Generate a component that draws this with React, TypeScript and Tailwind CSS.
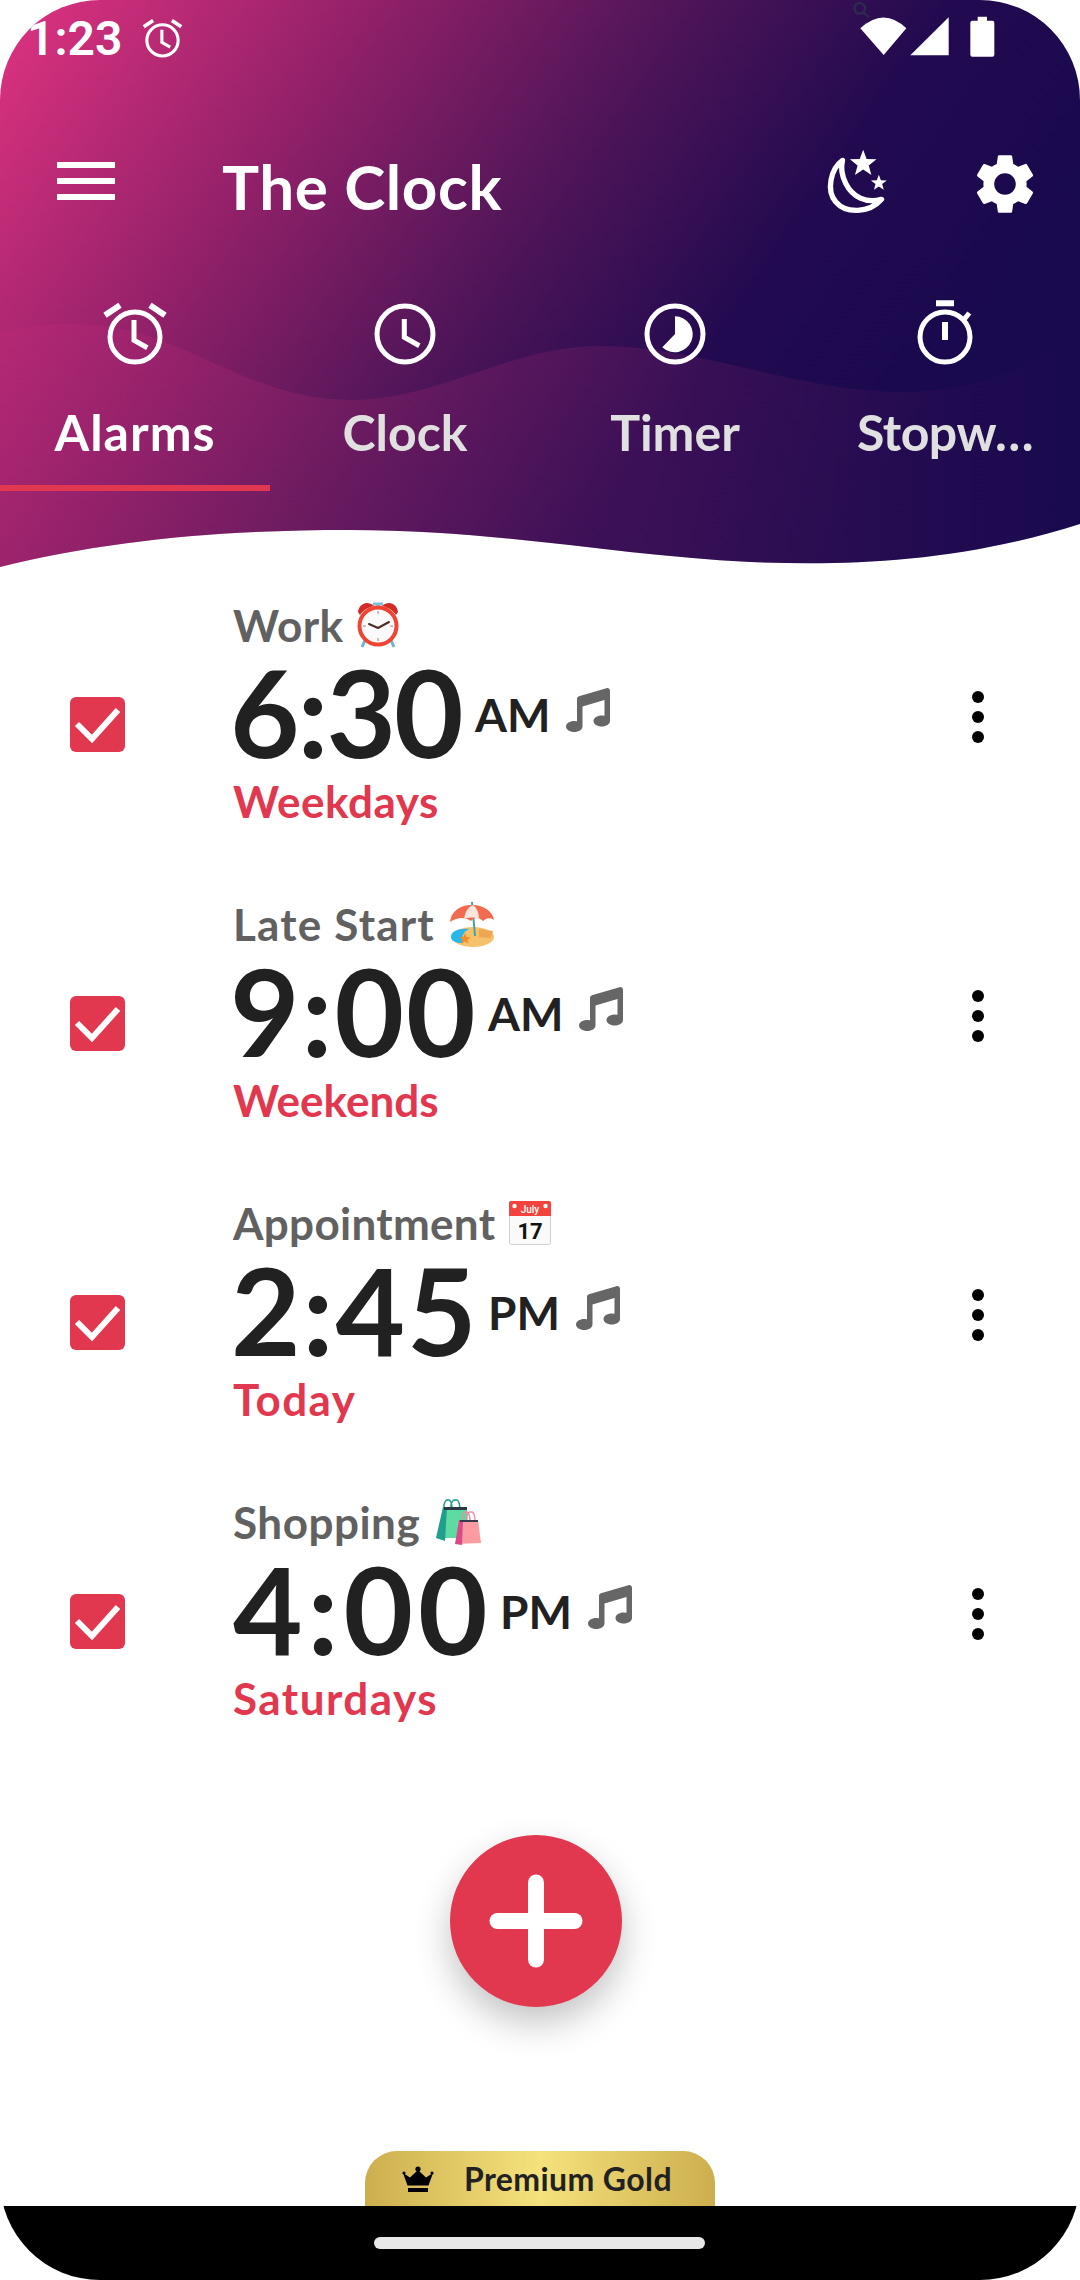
import React from "react";
import { FaMusic } from "react-icons/fa";
import { MdSettings } from "react-icons/md";

function star(cx: number, cy: number, r: number) {
  const pts: string[] = [];
  for (let i = 0; i < 10; i++) {
    const rad = i % 2 === 0 ? r : r * 0.42;
    const a = -Math.PI / 2 + (i * Math.PI) / 5;
    pts.push(`${cx + rad * Math.cos(a)},${cy + rad * Math.sin(a)}`);
  }
  return pts.join(" ");
}

function AlarmIcon({ size = 72 }: { size?: number }) {
  return (
    <svg width={size} height={size} viewBox="0 0 72 72" fill="none" stroke="#fff">
      <circle cx="36" cy="39" r="25" strokeWidth="5" />
      <path d="M35 22V42.3L48.3 49.7" strokeWidth="5" />
      <path d="M6 17.3L21 7.3M51 7.3L66 17.3" strokeWidth="6" />
    </svg>
  );
}
function ClockIcon() {
  return (
    <svg width="72" height="72" viewBox="0 0 72 72" fill="none" stroke="#fff">
      <circle cx="36" cy="36" r="28" strokeWidth="5" />
      <path d="M35.3 21V39.3L50.3 47.7" strokeWidth="5" />
    </svg>
  );
}
function TimerIcon() {
  return (
    <svg width="72" height="72" viewBox="0 0 72 72" fill="none">
      <circle cx="36" cy="36" r="28" strokeWidth="5" stroke="#fff" />
      <path d="M36 36V18.3A18 18 0 1 1 23.3 49.3Z" fill="#fff" />
    </svg>
  );
}
function StopwatchIcon() {
  return (
    <svg width="72" height="72" viewBox="0 0 72 72" fill="none" stroke="#fff">
      <circle cx="36" cy="39" r="25" strokeWidth="5" />
      <path d="M36 24V42M27 5.3H45" strokeWidth="6" />
      <path d="M54.3 22.3L60.3 15" strokeWidth="5" />
    </svg>
  );
}
function MoonIcon() {
  return (
    <svg width="67" height="70" viewBox="130 440 200 210" fill="none">
      <path
        d="M185 480C150 505 135 570 165 605C195 640 265 640 302 597C255 610 215 590 195 550C180 520 180 500 185 480Z"
        stroke="#fff"
        strokeWidth="16"
        strokeLinejoin="round"
      />
      <polygon points={star(247, 490, 42)} fill="#fff" />
      <polygon points={star(294, 548, 25)} fill="#fff" />
    </svg>
  );
}
function StatusIcons() {
  return (
    <svg width="150" height="60" viewBox="200 0 450 180">
      <circle cx="238" cy="25" r="16" fill="none" stroke="#2e2a4c" strokeWidth="7" />
      <path d="M250 37L266 52" stroke="#2e2a4c" strokeWidth="7" />
      <path d="M240 85Q310 20 378 85L310 165Z" fill="#fff" />
      <path d="M390 166L505 52V166Z" fill="#fff" />
      <path d="M592 50H620V62H636Q642 62 642 68V164Q642 170 636 170H576Q570 170 570 164V68Q570 62 576 62H592Z" fill="#fff" />
    </svg>
  );
}
function CrownIcon() {
  return (
    <svg width="32" height="26" viewBox="0 0 32 26" fill="#000">
      <circle cx="16" cy="3" r="2.6" />
      <circle cx="2" cy="7" r="1.6" />
      <circle cx="30" cy="7" r="1.6" />
      <path d="M1 7L8 11.5L16 4L24 11.5L31 7L26.5 19.5H5.5Z" />
      <rect x="6" y="22" width="20" height="4" />
    </svg>
  );
}

function EmojiAlarm() {
  return (
    <svg width="42" height="48" viewBox="0 0 42 48">
      <path d="M9 37L5 46M33 37L37 46" stroke="#6fb4d4" strokeWidth="3" />
      <path d="M21 2V8M16 3H26" stroke="#7cc0dc" strokeWidth="3" />
      <path d="M1 11C2 3 10 -1 17 5C12 6 6 9 3 14Z" fill="#d32a25" />
      <path d="M41 11C40 3 32 -1 25 5C30 6 36 9 39 14Z" fill="#d32a25" />
      <circle cx="21" cy="25" r="18.5" fill="#fafafa" stroke="#f04434" strokeWidth="4" />
      <path d="M21 27L12 23M21 27L32 21" stroke="#4e2d25" strokeWidth="2" strokeLinecap="round" />
      <g fill="#b9a79f">
        <rect x="20.4" y="10" width="1.4" height="3" />
        <rect x="20.4" y="37" width="1.4" height="3" />
        <rect x="6" y="24.4" width="3" height="1.4" />
        <rect x="33" y="24.4" width="3" height="1.4" />
      </g>
    </svg>
  );
}
function EmojiBeach() {
  return (
    <svg width="46" height="46" viewBox="0 0 46 46">
      <ellipse cx="24" cy="36" rx="21" ry="10" fill="#f5c26b" />
      <path d="M2 36C2 30 10 27 20 28C14 31 12 36 14 42C7 42 2 40 2 36Z" fill="#29b6e8" />
      <path d="M30 28L44 30L42 37L30 36Z" fill="#f0a552" />
      <path d="M23 1L26 35" stroke="#3fa5a8" strokeWidth="2" />
      <path d="M1 21C2 10 12 3 24 4C35 4 44 11 45 19C41 16 37 17 34 20C30 16 25 16 22 20C16 16 9 16 1 21Z" fill="#f26a50" />
      <path d="M15 18C16 11 19 6 24 4C28 7 30 12 30 18C26 16 20 16 15 18Z" fill="#fbe6dc" />
      <polygon points={star(16, 38, 6)} fill="#f58a26" />
    </svg>
  );
}
function EmojiCalendar() {
  return (
    <svg width="42" height="44" viewBox="0 0 42 44">
      <rect x="0.5" y="0.5" width="41" height="43" rx="2" fill="#fafafa" stroke="#d0d0d0" />
      <path d="M0 15V2Q0 0 2 0H40Q42 0 42 2V15Z" fill="#f4433c" />
      <circle cx="5.5" cy="5" r="2.2" fill="#fff" />
      <circle cx="36.5" cy="5" r="2.2" fill="#fff" />
      <text x="21" y="12" textAnchor="middle" fontSize="10" fontWeight="500" fill="#fff" fontFamily="Roboto, sans-serif">July</text>
      <text x="21" y="38" textAnchor="middle" fontSize="22" fontWeight="700" fill="#111" fontFamily="Roboto, sans-serif">17</text>
    </svg>
  );
}
function EmojiBags() {
  return (
    <svg width="46" height="48" viewBox="0 0 46 48">
      <path d="M8 14V7Q9 1 13 2Q16 3 16 12M15 14V7Q16 1 21 2Q24 3 24 14" fill="none" stroke="#26a58e" strokeWidth="1.6" />
      <path d="M7 9H31V40H2Z" fill="#5edba2" />
      <path d="M7 9H11L9 43L0 40Z" fill="#1f9f8c" />
      <path d="M8 9H31V12H8Z" fill="#2b3844" />
      <path d="M26 24V18Q28 13 31 14Q34 15 34 24M31 23V18Q32 13 36 14Q39 15 39 23" fill="none" stroke="#f08aa0" strokeWidth="1.4" />
      <path d="M23 22H42L45 45L20 46Z" fill="#fd9ba2" />
      <path d="M23 22H27L26 47L19 46Z" fill="#d84b86" />
      <path d="M24 22H42V24H24Z" fill="#3a3a4e" />
    </svg>
  );
}

const alarms = [
  { label: "Work", ltrack: "tracking-[0.4px]", emoji: <EmojiAlarm />, gap: "ml-[14px]", time: "6:30", track: "tracking-[-2px] ml-[-3px]", unit: "AM", tw: "w-[245px]", sub: "Weekdays", strack: "tracking-[0.5px]" },
  { label: "Late Start", ltrack: "tracking-[1.2px]", emoji: <EmojiBeach />, gap: "ml-[14px]", time: "9:00", track: "tracking-[2px] ml-[-3px]", unit: "AM", tw: "w-[258px]", sub: "Weekends", strack: "tracking-[0px]" },
  { label: "Appointment", ltrack: "tracking-[0.3px]", emoji: <EmojiCalendar />, gap: "ml-[14px]", time: "2:45", track: "tracking-[2px] ml-[-2px]", unit: "PM", tw: "w-[257px]", sub: "Today", strack: "tracking-[1.4px]" },
  { label: "Shopping", ltrack: "tracking-[0.5px]", emoji: <EmojiBags />, gap: "ml-[16px]", time: "4:00", track: "tracking-[5px]", unit: "PM", tw: "w-[267px]", sub: "Saturdays", strack: "tracking-[1.5px]" },
];

const tabs = [
  { label: "Alarms", icon: <AlarmIcon />, color: "text-white tracking-[1px]", bar: "bg-[#e2384f]" },
  { label: "Clock", icon: <ClockIcon />, color: "text-[#e0e0e0]", bar: "bg-transparent" },
  { label: "Timer", icon: <TimerIcon />, color: "text-[#e0e0e0]", bar: "bg-transparent" },
  { label: "Stopw…", icon: <StopwatchIcon />, color: "text-[#e0e0e0] tracking-[-0.5px]", bar: "bg-transparent" },
];

export default function App() {
  return (
    <div className="w-[1080px] h-[2280px] relative overflow-hidden rounded-[100px] bg-white flex flex-col font-['Lato',sans-serif]">
      <header className="relative h-[575px] shrink-0">
        <svg className="absolute inset-0" width="1080" height="575" viewBox="0 0 1080 575">
          <defs>
            <linearGradient id="hdr" gradientUnits="userSpaceOnUse" x1="0" y1="50" x2="800" y2="600">
              <stop offset="0" stopColor="#d9317e" />
              <stop offset="0.3" stopColor="#8f2068" />
              <stop offset="0.55" stopColor="#4f1558" />
              <stop offset="0.78" stopColor="#220a50" />
              <stop offset="1" stopColor="#19094e" />
            </linearGradient>
            <linearGradient id="lift" gradientUnits="userSpaceOnUse" x1="0" y1="0" x2="1080" y2="0">
              <stop offset="0" stopColor="#c02a78" stopOpacity="0.3" />
              <stop offset="0.6" stopColor="#a0286f" stopOpacity="0.2" />
              <stop offset="1" stopColor="#a0286f" stopOpacity="0" />
            </linearGradient>
          </defs>
          <path d="M0 0H1080V524C960 562 850 566 750 562C620 556 500 530 350 530C220 530 110 540 0 567Z" fill="url(#hdr)" />
          <path
            d="M0 333C40 322 100 318 160 340C230 368 280 400 350 400C440 400 510 346 600 346C700 346 800 392 900 392C990 392 1050 360 1080 315V524C960 562 850 566 750 562C620 556 500 530 350 530C220 530 110 540 0 567Z"
            fill="url(#lift)"
          />
        </svg>
        <div className="relative flex flex-col">
          <div className="h-[76px] flex items-start">
            <span className="ml-[27px] mt-[11px] text-[48px] leading-[56px] font-semibold text-white font-['Roboto',sans-serif]">1:23</span>
            <span className="ml-[18px] mt-[16px]">
              <AlarmIcon size={45} />
            </span>
            <span className="ml-auto mr-[83px]">
              <StatusIcons />
            </span>
          </div>
          <div className="h-[220px] flex items-center pl-[57px] pr-[45px]">
            <div className="w-[58px] flex flex-col gap-[10px] mt-[-10px]">
              <div className="h-[6px] bg-white" />
              <div className="h-[6px] bg-white" />
              <div className="h-[6px] bg-white" />
            </div>
            <span className="ml-[107px] text-[62px] leading-[72px] font-bold text-white tracking-[0.6px]">The Clock</span>
            <span className="ml-auto mt-[-9px]">
              <MoonIcon />
            </span>
            <span className="ml-[78px] mr-[-6px] mt-[-4px]">
              <MdSettings size={72} color="#fff" />
            </span>
          </div>
          <div className="h-[195px] grid grid-cols-4">
            {tabs.map((t) => (
              <div key={t.label} className="flex flex-col items-center">
                <div className="mt-[2px]">{t.icon}</div>
                <span className={`mt-[32px] text-[50px] leading-[60px] font-bold whitespace-nowrap ${t.color}`}>{t.label}</span>
                <div className={`mt-auto h-[6px] w-full ${t.bar}`} />
              </div>
            ))}
          </div>
        </div>
      </header>

      <main className="flex flex-col shrink-0">
        {alarms.map((a) => (
          <div key={a.label} className="h-[299px] flex items-center pl-[70px] pr-[96px]">
            <div className="w-[55px] h-[55px] rounded-[6px] bg-[#e2384f] shrink-0">
              <svg width="55" height="55" viewBox="0 0 55 55" fill="none">
                <path d="M7 27L22 42L48 13" stroke="#fff" strokeWidth="6" />
              </svg>
            </div>
            <div className="ml-[108px] flex flex-col mb-[24px]">
              <div className="flex items-center h-[60px]">
                <span className={`text-[44px] leading-[60px] font-bold text-[#616161] ${a.ltrack}`}>{a.label}</span>
                <span className={`${a.gap} flex`}>{a.emoji}</span>
              </div>
              <div className="flex items-center h-[110px] mt-[2px]">
                <span className={`${a.tw} text-[120px] leading-[110px] font-bold text-[#212121] ${a.track}`}>{a.time}</span>
                <span className="text-[46px] leading-[56px] font-bold text-[#212121] mt-[6px]">{a.unit}</span>
                <FaMusic size={44} color="#666" className="ml-[16px] mt-[-4px]" />
              </div>
              <span className={`mt-[4px] text-[44px] leading-[60px] font-bold text-[#e2384f] ${a.strack}`}>{a.sub}</span>
            </div>
            <div className="ml-auto flex flex-col gap-[8px] mb-[15px]">
              <div className="w-[12px] h-[12px] rounded-full bg-black" />
              <div className="w-[12px] h-[12px] rounded-full bg-black" />
              <div className="w-[12px] h-[12px] rounded-full bg-black" />
            </div>
          </div>
        ))}
      </main>

      <div className="flex-1 flex flex-col">
        <button className="relative mt-[64px] ml-[450px] w-[172px] h-[172px] rounded-full bg-[#e2384f] shadow-[0_16px_36px_rgba(0,0,0,0.24)] flex items-center justify-center">
          <svg width="94" height="94" viewBox="0 0 94 94">
            <rect x="0.5" y="39" width="93" height="16" rx="8" fill="#fff" />
            <rect x="39" y="0.5" width="16" height="93" rx="8" fill="#fff" />
          </svg>
        </button>
        <div className="mt-auto mx-auto w-[350px] h-[55px] rounded-t-[32px] bg-[linear-gradient(90deg,#cdae4e_0%,#f5e27c_50%,#cdae4e_100%)] flex items-center pl-[37px]">
          <CrownIcon />
          <span className="ml-[30px] text-[32px] leading-[40px] font-bold text-[#212121] tracking-[0.4px]">Premium Gold</span>
        </div>
      </div>

      <div className="h-[74px] shrink-0 bg-black flex justify-center pt-[31px] pr-[2px]">
        <div className="w-[331px] h-[12px] rounded-full bg-[#e8e8e8]" />
      </div>
    </div>
  );
}
